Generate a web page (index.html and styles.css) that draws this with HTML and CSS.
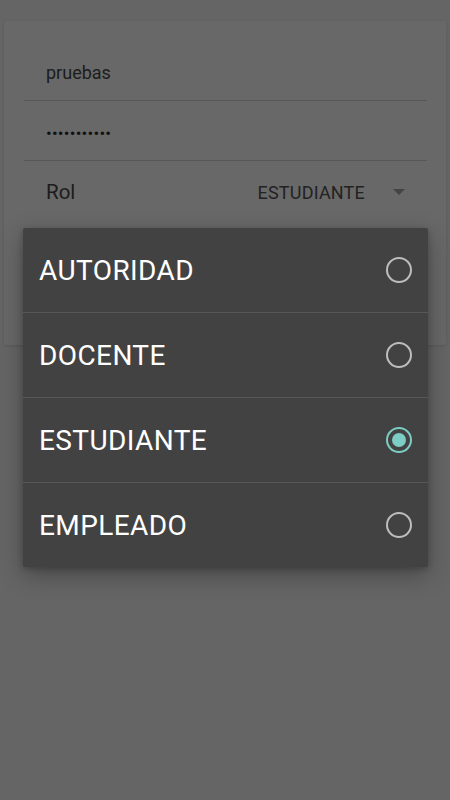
FILE: index.html
```html
<!DOCTYPE html>
<html>
<head>
    <title>Login</title>
    <meta name="viewport" content="width=device-width, initial-scale=1.0">
    <link rel="stylesheet" href="styles.css">
</head>
<body>
    <div class="screen">
        <div class="card">
            <div class="field"><span class="value">pruebas</span></div>
            <div class="field"><span class="value dots">•••••••••••</span></div>
            <div class="field role">
                <span class="label">Rol</span>
                <span class="select">ESTUDIANTE<span class="arrow"></span></span>
            </div>
        </div>
    </div>

    <div class="dialog">
        <div class="option"><span>AUTORIDAD</span><span class="radio"></span></div>
        <div class="option"><span>DOCENTE</span><span class="radio"></span></div>
        <div class="option"><span>ESTUDIANTE</span><span class="radio checked"></span></div>
        <div class="option"><span>EMPLEADO</span><span class="radio"></span></div>
    </div>
</body>
</html>
```

FILE: styles.css
```css
html, body {
    margin: 0;
    height: 100%;
    background-color: #656565;
    font-family: Roboto, "Noto Sans", sans-serif;
}

.screen {
    padding: 21px 4px 0;
}

.card {
    height: 324px;
    box-sizing: border-box;
    padding: 20px 19px 0 20px;
    background-color: #686868;
    border-radius: 2px;
    box-shadow: 0 1px 3px rgba(0, 0, 0, 0.12);
}

.field {
    display: flex;
    align-items: center;
    height: 60px;
    box-sizing: border-box;
    padding: 4px 0 0 22px;
    border-bottom: 1px solid #575757;
    color: #1c1c1c;
    font-size: 18px;
}

.dots {
    letter-spacing: 0.2px;
    font-size: 17px;
    color: #111;
}

.field.role {
    height: 62px;
    border-bottom: none;
    justify-content: space-between;
    padding-top: 0;
}

.label {
    font-size: 20.5px;
}

.select {
    display: flex;
    align-items: center;
    color: #222;
    font-size: 18px;
    letter-spacing: 0.2px;
    padding-right: 22px;
}

.arrow {
    margin-left: 28px;
    width: 0;
    height: 0;
    border-left: 6.5px solid transparent;
    border-right: 6.5px solid transparent;
    border-top: 6px solid #444;
}

.dialog {
    position: absolute;
    left: 23px;
    top: 228px;
    width: 405px;
    background-color: #424242;
    border-radius: 2px;
    box-shadow: 0 8px 24px rgba(0, 0, 0, 0.3), 0 2px 6px rgba(0, 0, 0, 0.2);
}

.option {
    display: flex;
    align-items: center;
    justify-content: space-between;
    height: 85px;
    box-sizing: border-box;
    padding: 0 16px 0 16px;
    color: #fff;
    font-size: 28px;
    letter-spacing: 0.4px;
    border-top: 1px solid #575757;
}

.option:first-child {
    border-top: none;
    height: 84px;
}

.radio {
    width: 26px;
    height: 26px;
    box-sizing: border-box;
    border: 2.5px solid #bdbdbd;
    border-radius: 50%;
    display: flex;
    align-items: center;
    justify-content: center;
}

.radio.checked {
    border-color: #7ccdc4;
}

.radio.checked::after {
    content: "";
    width: 14px;
    height: 14px;
    border-radius: 50%;
    background-color: #7ccdc4;
}
```
